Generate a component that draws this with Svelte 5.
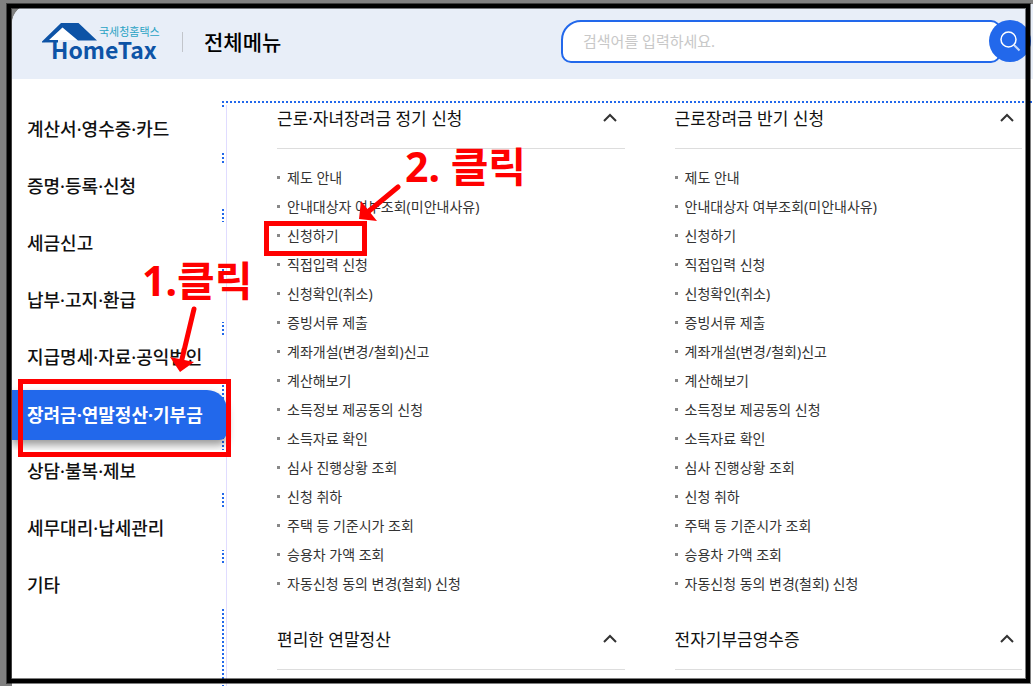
<script lang="ts">
	const categories = [
		'계산서·영수증·카드',
		'증명·등록·신청',
		'세금신고',
		'납부·고지·환급',
		'지급명세·자료·공익법인',
		'장려금·연말정산·기부금',
		'상담·불복·제보',
		'세무대리·납세관리',
		'기타'
	];

	const services = [
		'제도 안내',
		'안내대상자 여부조회(미안내사유)',
		'신청하기',
		'직접입력 신청',
		'신청확인(취소)',
		'증빙서류 제출',
		'계좌개설(변경/철회)신고',
		'계산해보기',
		'소득정보 제공동의 신청',
		'소득자료 확인',
		'심사 진행상황 조회',
		'신청 취하',
		'주택 등 기준시가 조회',
		'승용차 가액 조회',
		'자동신청 동의 변경(철회) 신청'
	];

	const sections = [
		{ title: '근로·자녀장려금 정기 신청', items: services },
		{ title: '근로장려금 반기 신청', items: services },
		{ title: '편리한 연말정산', items: [] },
		{ title: '전자기부금영수증', items: [] }
	];

	let active = $state(5);
	let query = $state('');
</script>

<div class="screen">
	<div class="page">
		<header class="header">
			<a href="#home" class="logo" aria-label="국세청홈택스 HomeTax">
				<svg width="118" height="42" viewBox="0 0 118 42">
					<path d="M3 20 20 3l8 6 10 10H14v3H3z" fill="#fff" />
					<path d="M0 20.500 19 2h17.500L55 19.500H36L20.500 6.500 7 19h9v2.500H0z" fill="#0d53a6" />
					<text class="logo-sub" x="57" y="15">국세청홈택스</text>
					<text class="logo-name" x="9" y="38">HomeTax</text>
				</svg>
			</a>
			<h1>전체메뉴</h1>
			<form class="search" onsubmit={(e) => e.preventDefault()}>
				<input type="text" aria-label="검색어" placeholder="검색어를 입력하세요." bind:value={query} />
				<button class="search-btn" aria-label="검색">
					<svg width="22" height="22" viewBox="0 0 22 22" fill="none" stroke="#fff">
						<circle cx="9.500" cy="9.500" r="7.500" stroke-width="1.500" />
						<path d="m15 15 5.500 5.500" stroke-width="2" opacity=".75" />
					</svg>
				</button>
			</form>
		</header>

		<main class="body">
			<nav class="categories" aria-label="전체메뉴">
				<ul>
					{#each categories as name, i}
						<li>
							<a href="#menu-{i}" class:active={i === active} onclick={() => (active = i)}>{name}</a>
						</li>
					{/each}
				</ul>
			</nav>

			<div class="sections">
				{#each sections as section}
					<section>
						<h2>
							<button aria-expanded="true">
								{section.title}
								<svg width="14" height="10" viewBox="0 0 14 10" fill="none" stroke="#333" stroke-width="2">
									<path d="M1 9 7 3l6 6" />
								</svg>
							</button>
						</h2>
						{#if section.items.length}
							<ul>
								{#each section.items as item}
									<li><a href="#service">{item}</a></li>
								{/each}
							</ul>
						{/if}
					</section>
				{/each}
			</div>
		</main>
	</div>

	<!-- Guide marks drawn over the menu -->
	<div class="frame"></div>
	<div class="box box-category"></div>
	<div class="box box-service"></div>
	<span class="step step-one">1.클릭</span>
	<span class="step step-two">2. 클릭</span>
	<svg class="arrows" width="420" height="400" fill="#f00" stroke="#f00">
		<path d="m194 309-12 50M398 187l-29 24" stroke-width="5" stroke-linecap="round" />
		<path d="m170 357 10 15 14-10zM361 201l-2 18 18 2z" stroke="none" />
	</svg>
</div>

<style>
	:global(body) {
		overflow: hidden;
	}

	.screen {
		position: relative;
		height: 100vh;
		overflow: hidden;
		box-sizing: border-box;
		padding: 4px 0 0 12px;
		background: #808080;
		font-family: 'Noto Sans', 'Noto Sans CJK KR', sans-serif;
		color: #111;
	}
	.page {
		display: flex;
		flex-direction: column;
		height: 100%;
		background: #fff;
		border-top-left-radius: 20px;
		overflow: hidden;
	}
	h1, h2, ul { margin: 0; padding: 0; }
	ul { list-style: none; }
	a { color: inherit; text-decoration: none; }
	button { font: inherit; color: inherit; cursor: pointer; }

	/* Header */
	.header {
		flex: none;
		display: flex;
		align-items: center;
		height: 75px;
		padding: 0 2px 0 30px;
		background: #e8eef8;
	}
	.logo {
		display: flex;
		font-family: 'Noto Sans CJK KR', sans-serif;
	}
	.logo svg { overflow: visible; }
	.logo-sub {
		font-size: 11px;
		fill: #2aa3c4;
	}
	.logo-name {
		font-size: 23px;
		font-weight: 700;
		fill: #0d53a6;
	}
	h1 {
		display: flex;
		align-items: center;
		margin-left: 22px;
		font-size: 21px;
		font-weight: 500;
		line-height: 30px;
		color: #000;
	}
	h1::before {
		content: '';
		width: 1px;
		height: 20px;
		margin-right: 21px;
		background: #c2c5cb;
	}

	.search {
		display: flex;
		align-items: flex-start;
		flex: 0 1 470px;
		margin-left: auto;
	}
	.search input {
		flex: 1;
		min-width: 0;
		height: 43px;
		box-sizing: border-box;
		padding: 0 20px 2px;
		border: 2px solid #2268eb;
		border-radius: 20px 10px 10px 10px;
		background: #fff;
		font: inherit;
		font-size: 15px;
		outline: none;
	}
	.search input::placeholder { color: #c8c8c8; }
	.search-btn {
		flex: none;
		display: flex;
		align-items: center;
		justify-content: center;
		width: 42px;
		height: 42px;
		margin-left: -12px;
		padding: 0;
		border: 0;
		border-radius: 50%;
		background: #2268eb;
		z-index: 1;
	}

	/* Menu body, with its dotted top edge */
	.body {
		flex: 1;
		display: flex;
		margin-top: 22px;
		background: repeating-linear-gradient(90deg, #2268eb 0 2px, #fff 2px 4px) 210px 0 / 100% 2px no-repeat;
	}

	.categories {
		flex: none;
		width: 215px;
		background:
			linear-gradient(#e0dcff, #e0dcff) 214px 4px / 1px 100% no-repeat,
			repeating-linear-gradient(#2268eb 0 2px, transparent 2px 4px) 210px 0 / 2px 100% no-repeat;
	}
	.categories li {
		display: flex;
		align-items: center;
		height: 57px;
	}
	.categories a {
		flex: 1;
		margin-right: 1px;
		padding-left: 15px;
		background: #fff;
		font-size: 18px;
		font-weight: 500;
		line-height: 43px;
		white-space: nowrap;
	}
	.categories a.active {
		margin-right: 0;
		border-radius: 0 20px 8px 0;
		background: #2268eb;
		box-shadow: 0 5px 8px rgba(0, 0, 0, 0.4);
		color: #fff;
		font-weight: 700;
		line-height: 50px;
	}

	.sections {
		flex: 1;
		display: grid;
		grid-template-columns: 1fr 1fr;
		align-content: start;
		gap: 24px 50px;
		padding: 1px 11px 0 50px;
	}
	h2 {
		padding-bottom: 16px;
		border-bottom: 1px solid #ddd;
		font-size: 17px;
		font-weight: 400;
	}
	h2 button {
		display: flex;
		align-items: center;
		justify-content: space-between;
		width: 100%;
		height: 30px;
		padding: 0 8px 0 0;
		border: 0;
		background: none;
	}
	.sections ul { padding: 14px 0 1px; }
	.sections li {
		display: flex;
		align-items: center;
		gap: 7px;
		font-size: 14px;
		line-height: 29px;
		color: #333;
	}
	.sections li::before {
		content: '';
		width: 3px;
		height: 3px;
		background: #888;
	}

	/* Guide marks */
	.frame, .box, .step, .arrows {
		position: absolute;
		z-index: 2;
		pointer-events: none;
	}
	.frame {
		inset: 4px 3px 3px 7px;
		border: 4px solid #000;
		box-shadow: 0 0 0 1px rgba(0, 0, 0, 0.5), inset 0 0 0 1px rgba(0, 0, 0, 0.5);
	}
	.box {
		box-sizing: border-box;
		border: 5px solid #f00;
	}
	.box-category {
		left: 18px;
		top: 379px;
		width: 213px;
		height: 78px;
	}
	.box-service {
		left: 264px;
		top: 221px;
		width: 103px;
		height: 35px;
	}
	.step {
		font-size: 41px;
		font-weight: 700;
		line-height: 48px;
		color: #f00;
		white-space: nowrap;
	}
	.step-one {
		left: 142px;
		top: 256px;
	}
	.step-two {
		left: 405px;
		top: 142px;
	}
	.arrows {
		left: 0;
		top: 0;
	}
</style>
